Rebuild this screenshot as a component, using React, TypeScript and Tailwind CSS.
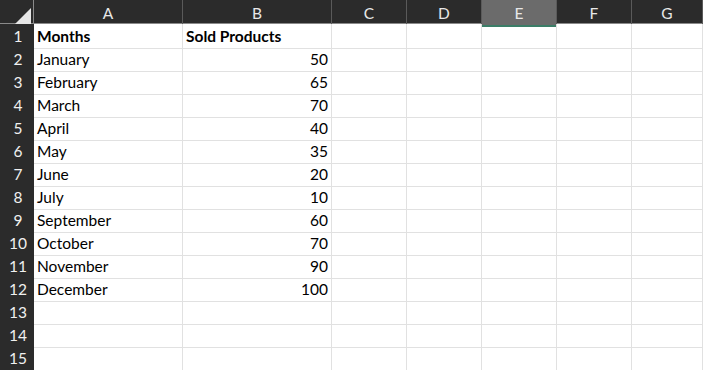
const cols = ["A", "B", "C", "D", "E", "F", "G"];

const data: [string, string][] = [
  ["Months", "Sold Products"],
  ["January", "50"],
  ["February", "65"],
  ["March", "70"],
  ["April", "40"],
  ["May", "35"],
  ["June", "20"],
  ["July", "10"],
  ["September", "60"],
  ["October", "70"],
  ["November", "90"],
  ["December", "100"],
  ["", ""],
  ["", ""],
  ["", ""],
];

const grid = "grid grid-cols-[34px_149px_149px_75px_75px_75px_75px_1fr]";

export default function App() {
  return (
    <div className="w-[703px] h-[370px] overflow-hidden bg-white font-['Lato','Liberation_Sans',sans-serif] text-[15.5px] text-black">
      <div className={`${grid} h-[24px] bg-[#2b2b2b] border-b border-[#8a8a8a]`}>
        <div className="flex items-end justify-end pr-[2px] pb-[2px] border-r border-[#8a8a8a]">
          <svg width="17" height="17" viewBox="0 0 17 17">
            <polygon points="17,0 17,17 0,17" fill="#e6e6e6" />
          </svg>
        </div>
        {cols.map((c) => (
          <div
            key={c}
            className={`flex items-center justify-center border-r border-[#5a5a5a] text-[#e8e8e8] ${
              c === "E" ? "bg-[#6b6b6b] border-b-2 border-b-[#3b7d67] pt-[2px]" : ""
            }`}
          >
            {c}
          </div>
        ))}
      </div>
      {data.map(([m, v], i) => (
        <div key={i} className={`${grid} h-[23px]`}>
          <div className="flex items-center justify-center pl-[2px] pt-[1px] bg-[#2b2b2b] border-b border-[#4a4a4a] text-[#f0f0f0]">
            {i + 1}
          </div>
          <div className={`flex items-center px-[3px] pt-[1px] border-r border-b border-[#e1e1e1] ${i === 0 ? "font-bold" : ""}`}>
            {m}
          </div>
          <div
            className={`flex items-center px-[3px] pt-[1px] border-r border-b border-[#e1e1e1] ${
              i === 0 ? "font-bold" : "justify-end"
            }`}
          >
            {v}
          </div>
          {[0, 1, 2, 3, 4].map((k) => (
            <div key={k} className="border-r border-b border-[#e1e1e1]" />
          ))}
        </div>
      ))}
    </div>
  );
}
